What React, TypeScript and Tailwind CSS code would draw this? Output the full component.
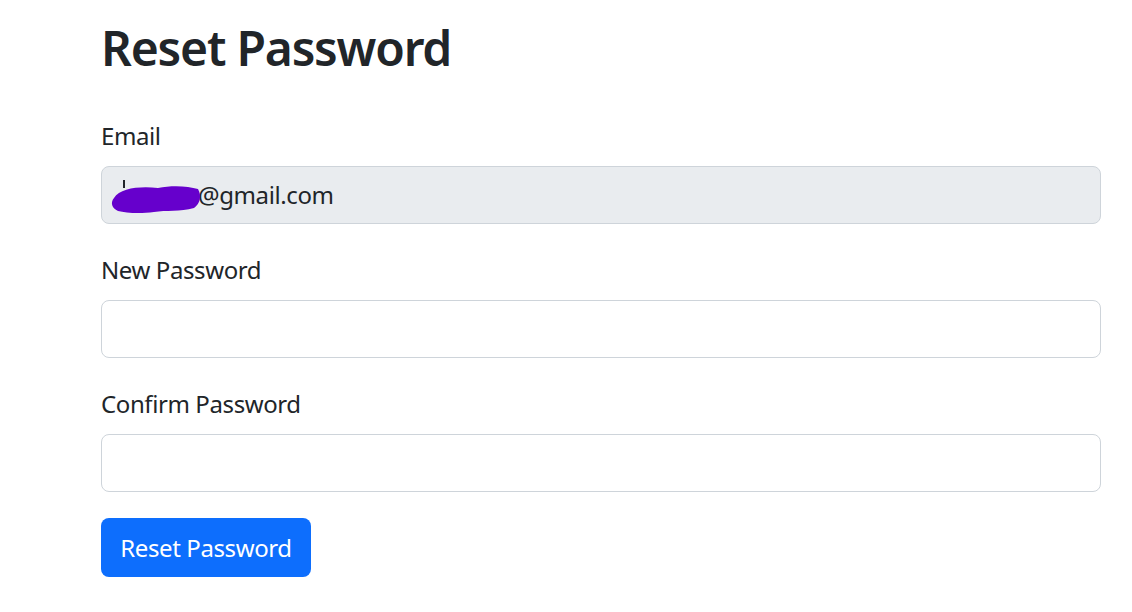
export default function App() {
  return (
    <div className="min-h-[612px] bg-white text-[#212529] font-['Noto_Sans',sans-serif]">
      <div className="w-[1000px] ml-[101px] pt-[18px]">
        <h1 className="text-[48px] leading-[60px] font-semibold tracking-[-1.2px] mb-[40px]">Reset Password</h1>

        <form className="flex flex-col tracking-[-0.4px]">
          <div className="mb-[28px]">
            <label className="block text-[24px] leading-[36px] mb-[12px]">Email</label>
            <div className="relative flex items-center h-[58px] rounded-[8px] border-[1.5px] border-[#ced4da] bg-[#e9ecef] pl-[18px] text-[24px]">
              <span className="absolute left-[21px] top-[13px] w-[2px] h-[8px] bg-[#212529]" />
              <svg width="92" height="30" viewBox="0 0 92 30" className="absolute left-[8px] top-[17px]">
                <path
                  d="M4 14 C10 4 30 2 48 4 C62 1 78 2 88 5 C92 12 90 20 84 24 C70 28 56 26 44 28 C30 30 16 29 8 27 C2 24 0 19 4 14 Z"
                  fill="#6600cc"
                />
              </svg>
              <span className="ml-[78px]">@gmail.com</span>
            </div>
          </div>

          <div className="mb-[28px]">
            <label className="block text-[24px] leading-[36px] mb-[12px]">New Password</label>
            <input
              type="password"
              className="block w-full h-[58px] rounded-[8px] border-[1.5px] border-[#ced4da] bg-white px-[18px] text-[24px] outline-none"
            />
          </div>

          <div className="mb-[26px]">
            <label className="block text-[24px] leading-[36px] mb-[12px]">Confirm Password</label>
            <input
              type="password"
              className="block w-full h-[58px] rounded-[8px] border-[1.5px] border-[#ced4da] bg-white px-[18px] text-[24px] outline-none"
            />
          </div>

          <div>
            <button
              type="button"
              className="h-[59px] w-[210px] rounded-[8px] bg-[#0d6efd] text-white text-[24px]"
            >
              Reset Password
            </button>
          </div>
        </form>
      </div>
    </div>
  );
}
